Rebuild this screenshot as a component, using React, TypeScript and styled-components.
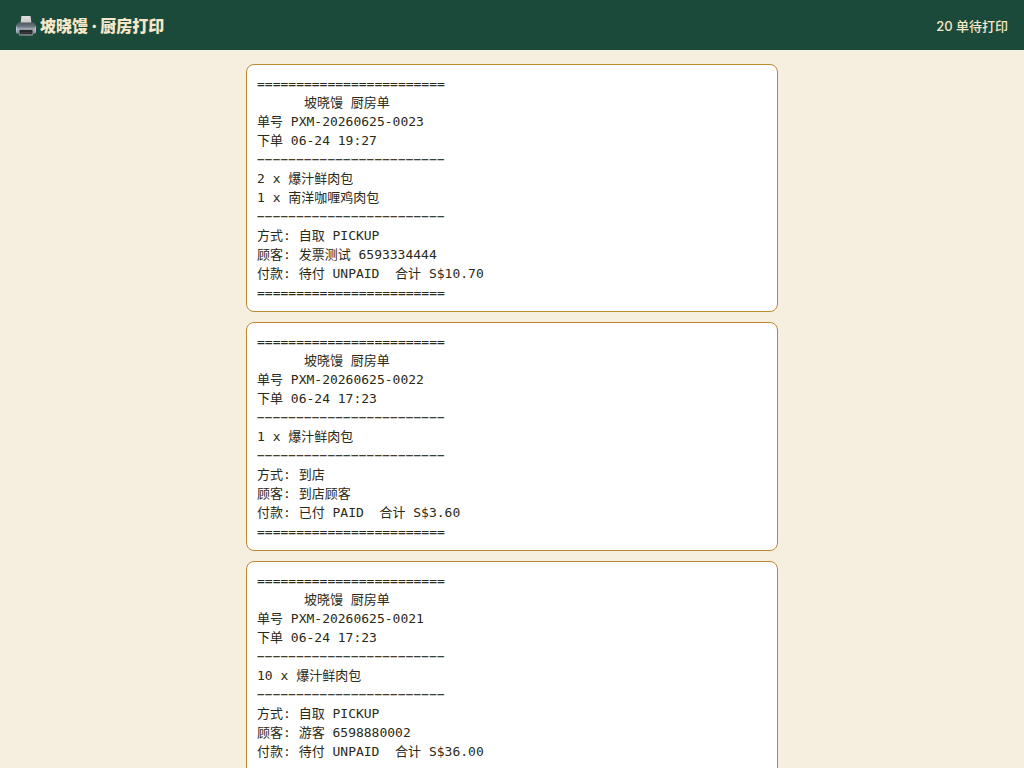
import React from "react";
import styled, { createGlobalStyle } from "styled-components";

const Global = createGlobalStyle`
  body {
    margin: 0;
    background: #f6eedf;
    color: #2b2917;
    font-family: Inter, "Noto Sans CJK SC", sans-serif;
  }
`;
const Header = styled.header`
  display: flex;
  align-items: center;
  justify-content: space-between;
  padding: 14px 16px 12px;
  background: #1c4a3a;
  color: #f6e7c8;
`;
const Title = styled.h1`
  display: flex;
  align-items: center;
  gap: 4px;
  margin: 0;
  font-size: 16px;
  line-height: 24px;
  font-weight: 900;
`;
const Count = styled.span`
  font-size: 13px;
  line-height: 24px;
  font-weight: 500;
`;
const List = styled.main`
  display: flex;
  flex-direction: column;
  gap: 10px;
  max-width: 532px;
  margin: 0 auto;
  padding: 14px;
`;
const Ticket = styled.pre`
  margin: 0;
  padding: 9px 10px;
  border: 1px solid #b8892f;
  border-radius: 8px;
  background: #fff;
  font-family: "DejaVu Sans Mono", "Noto Sans CJK SC", monospace;
  font-size: 13px;
  line-height: 19px;
  white-space: pre-wrap;
`;

const Printer = () => (
  <svg width="20" height="20" viewBox="0 0 20 20" aria-hidden="true">
    <defs>
      <linearGradient id="body" x1="0" y1="0" x2="0" y2="1">
        <stop offset="0" stopColor="#4f5961" />
        <stop offset="0.35" stopColor="#69747e" />
        <stop offset="0.6" stopColor="#a9b4bf" />
        <stop offset="1" stopColor="#7b858e" />
      </linearGradient>
      <linearGradient id="paper" x1="0" y1="0" x2="0" y2="1">
        <stop offset="0" stopColor="#dedede" />
        <stop offset="1" stopColor="#c9c9c9" />
      </linearGradient>
    </defs>
    <path d="M5.4 0h9.2l.8 7H4.6z" fill="url(#paper)" />
    <path d="M2.4 6.4h15.2L20 9.4v6.8q0 1.6-1.6 1.6H1.6Q0 17.8 0 16.2V9.4z" fill="url(#body)" />
    <path d="M.4 10.4v5.2M19.6 10.4v5.2" stroke="#b9d3e6" strokeWidth="0.8" />
    <path d="M3 13.4h14v6.2H3z" fill="#8b9095" />
    <path d="M3.6 14h12.8v4.2H3.6z" fill="#25292c" />
    <path d="M4.6 16.8h10.8" stroke="#44494d" strokeWidth="0.8" />
  </svg>
);

const orders = [
  { no: "0023", time: "19:27", items: ["2 x 爆汁鲜肉包", "1 x 南洋咖喱鸡肉包"], mode: "自取 PICKUP", customer: "发票测试 6593334444", pay: "待付 UNPAID  合计 S$10.70" },
  { no: "0022", time: "17:23", items: ["1 x 爆汁鲜肉包"], mode: "到店", customer: "到店顾客", pay: "已付 PAID  合计 S$3.60" },
  { no: "0021", time: "17:23", items: ["10 x 爆汁鲜肉包"], mode: "自取 PICKUP", customer: "游客 6598880002", pay: "待付 UNPAID  合计 S$36.00" },
];
const edge = "=".repeat(24);
const rule = "−".repeat(24);

export default function App() {
  return (
    <>
      <Global />
      <Header>
        <Title><Printer />坡晓馒 · 厨房打印</Title>
        <Count>20 单待打印</Count>
      </Header>
      <List>
        {orders.map((o) => (
          <Ticket key={o.no}>
            {[edge, "      坡晓馒 厨房单", `单号 PXM-20260625-${o.no}`, `下单 06-24 ${o.time}`, rule, ...o.items, rule,
              `方式: ${o.mode}`, `顾客: ${o.customer}`, `付款: ${o.pay}`, edge].join("\n")}
          </Ticket>
        ))}
      </List>
    </>
  );
}
